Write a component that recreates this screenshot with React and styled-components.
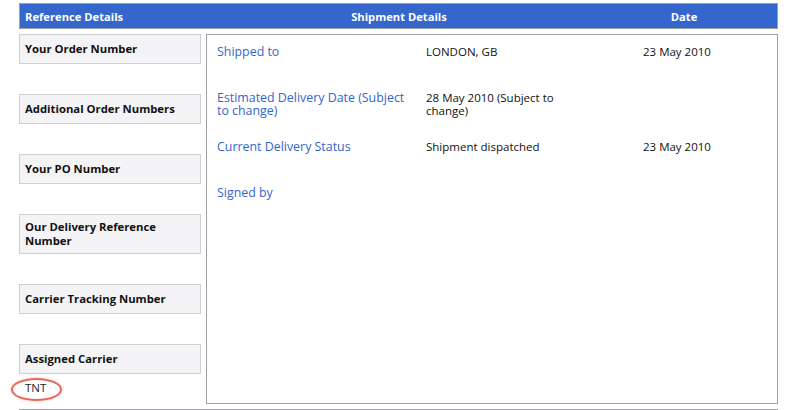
import React from "react";
import styled, { createGlobalStyle } from "styled-components";

const Global = createGlobalStyle`
  html, body { margin: 0; padding: 0; background: #ffffff; }
  body { font-family: "Open Sans", "DejaVu Sans", sans-serif; color: #111; }
`;

const Page = styled.div`
  width: 759px;
  padding: 3px 0 0 19px;
`;

const HeaderBar = styled.div`
  display: grid;
  grid-template-columns: 187px 384px 1fr;
  height: 24px;
  align-items: center;
  background: #3466cc;
  border: 1px solid #9a9da2;
  color: #ffffff;
  font-weight: 700;
  font-size: 11.2px;
`;

const HeaderCell = styled.div`
  text-align: ${(p) => (p.$align === "left" ? "left" : "center")};
  padding-left: ${(p) => (p.$align === "left" ? "5px" : "0")};
`;

const Body = styled.div`
  display: flex;
  gap: 5px;
  margin-top: 5px;
`;

const LeftCol = styled.div`
  width: 182px;
  flex: none;
  display: flex;
  flex-direction: column;
`;

const LabelBox = styled.div`
  display: flex;
  align-items: center;
  min-height: 18px;
  padding: 5px;
  background: #f4f4f6;
  border: 1px solid #cfcfd2;
  font-size: 11.3px;
  font-weight: 700;
  line-height: 14px;
  color: #111;
`;

const ValueCell = styled.div`
  position: relative;
  height: 30px;
  padding: 7px 6px 0;
  box-sizing: border-box;
  font-size: 11.5px;
  line-height: 14px;
  color: #1d2233;
`;

const Highlight = styled.span`
  position: absolute;
  left: -8px;
  top: 4px;
  width: 51px;
  height: 23px;
  box-sizing: border-box;
  border: 2px solid #e8665c;
  border-radius: 50%;
  box-shadow: 0 0 2px rgba(232, 102, 92, 0.55);
`;

const Panel = styled.div`
  flex: 1;
  border: 1px solid #9ea2a7;
  padding: 10px 10px;
`;

const Row = styled.div`
  display: grid;
  grid-template-columns: 209px 217px 1fr;
  min-height: 46px;
  padding-bottom: 23px;
  box-sizing: border-box;
  line-height: 13px;
`;

const FieldLabel = styled.div`
  color: #3366cc;
  font-size: 12.4px;
  padding-right: 9px;
`;

const FieldValue = styled.div`
  font-size: 11.5px;
  color: #111;
  padding-right: ${(p) => (p.$wrap ? "67px" : "0")};
`;

const BottomRule = styled.div`
  margin-top: 5px;
  height: 0;
  border-top: 1px solid #9ea2a7;
`;

const leftItems = [
  { label: "Your Order Number" },
  { label: "Additional Order Numbers" },
  { label: "Your PO Number" },
  { label: "Our Delivery Reference Number" },
  { label: "Carrier Tracking Number" },
  { label: "Assigned Carrier", value: "TNT", marked: true },
];

const rows = [
  { label: "Shipped to", value: "LONDON, GB", date: "23 May 2010" },
  { label: "Estimated Delivery Date (Subject to change)", value: "28 May 2010 (Subject to change)", date: "" },
  { label: "Current Delivery Status", value: "Shipment dispatched", date: "23 May 2010" },
  { label: "Signed by", value: "", date: "" },
];

export default function App() {
  return (
    <>
      <Global />
      <Page>
        <HeaderBar>
          <HeaderCell $align="left">Reference Details</HeaderCell>
          <HeaderCell>Shipment Details</HeaderCell>
          <HeaderCell>Date</HeaderCell>
        </HeaderBar>
        <Body>
          <LeftCol>
            {leftItems.map((it) => (
              <React.Fragment key={it.label}>
                <LabelBox>{it.label}</LabelBox>
                <ValueCell>
                  {it.value}
                  {it.marked && <Highlight />}
                </ValueCell>
              </React.Fragment>
            ))}
          </LeftCol>
          <Panel>
            {rows.map((r) => (
              <Row key={r.label}>
                <FieldLabel>{r.label}</FieldLabel>
                <FieldValue $wrap>{r.value}</FieldValue>
                <FieldValue>{r.date}</FieldValue>
              </Row>
            ))}
          </Panel>
        </Body>
        <BottomRule />
      </Page>
    </>
  );
}
